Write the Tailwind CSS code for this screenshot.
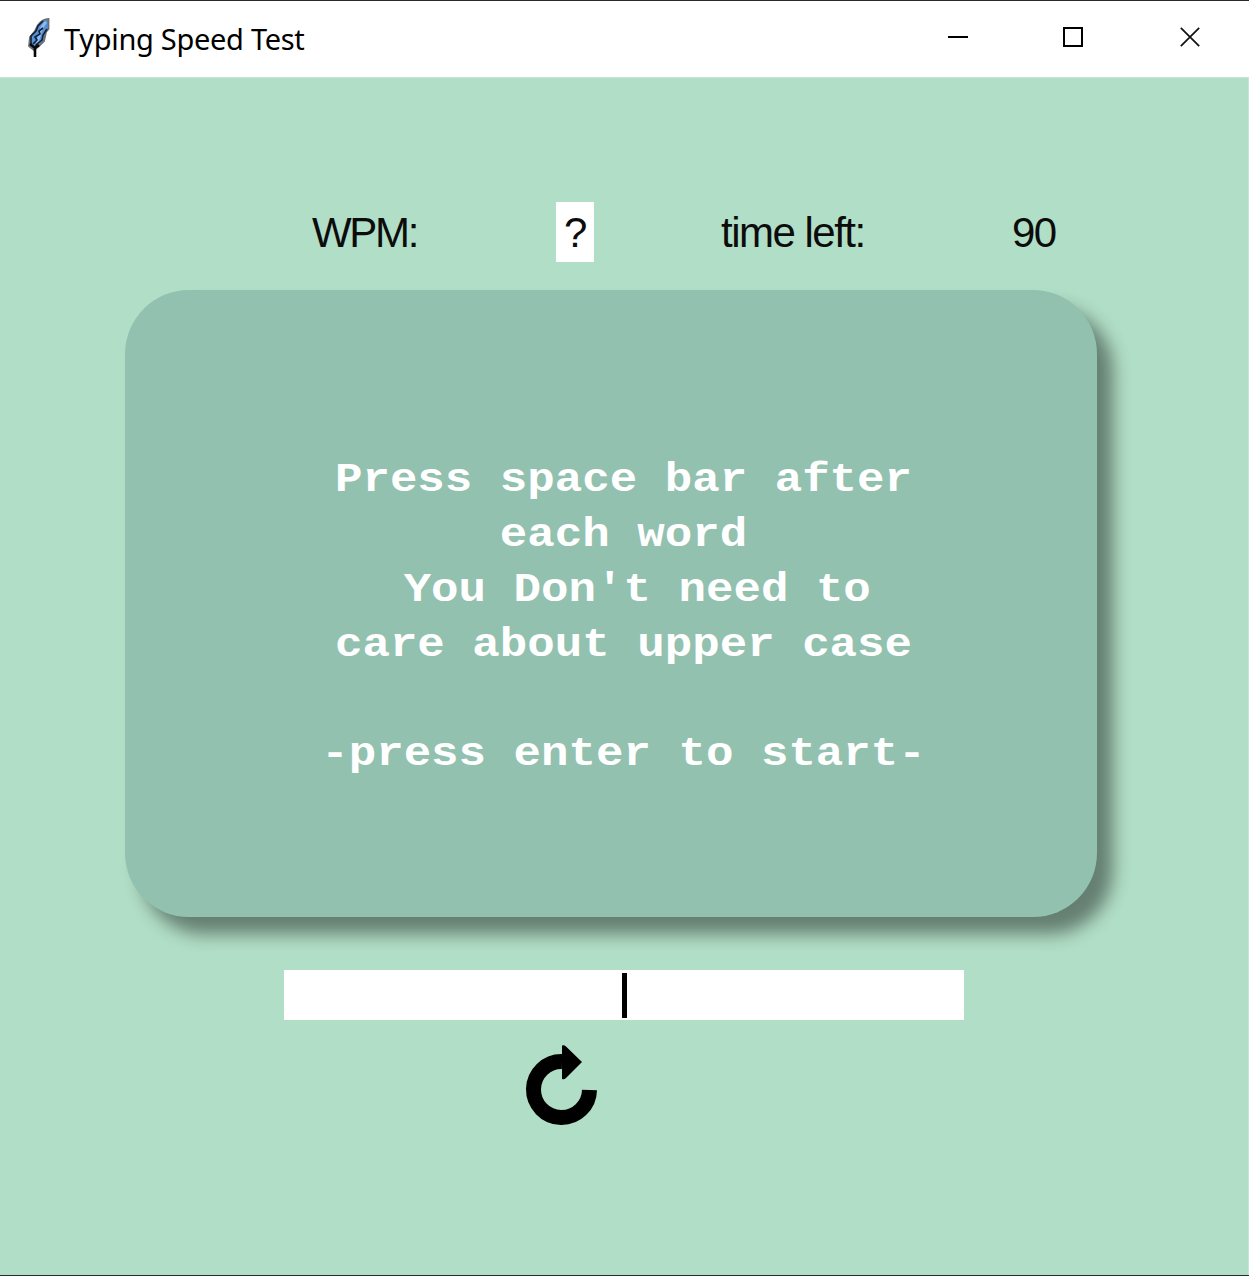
<!DOCTYPE html>
<html lang="en">
<head>
<meta charset="utf-8">
<title>Typing Speed Test</title>
<script src="https://cdn.jsdelivr.net/npm/@tailwindcss/browser@4"></script>
</head>
<body class="flex h-[1276px] w-[1249px] flex-col overflow-hidden border-y border-[#2b2929] bg-[#b1dec6]">
  <header class="flex h-[76px] shrink-0 items-start bg-white">
    <svg class="mt-[15px] ml-[26px] h-[42px] w-[26px]" viewBox="0 0 26 42">
      <path d="M22.500 3Q17 3 12 9L9 15L4 21L3 30L8 34L13 30L18 25L20 16L22.500 13Z" fill="#5590d8" stroke="#6b6f75" stroke-width="1.800"/>
      <path d="M20 6Q15 11 14 18L11 27" fill="none" stroke="#8ebcf0" stroke-width="2.500"/>
      <path d="M17 5L12 10L10 15L5 20L5 28M17 12L13 15L14 18L9 21L11 24L7 28M21 13L17 19L16 24L11 28L9 31" fill="none" stroke="#15202e" stroke-width="1.600"/>
      <path d="M4 28L9 32L9 41M9 32L13 29" fill="none" stroke="#080808" stroke-width="2.600"/>
    </svg>
    <h1 class="mt-[18px] ml-[12px] w-[300px] font-['Noto_Sans','Open_Sans',sans-serif] text-[29px] leading-[40px] tracking-[-0.3px] whitespace-nowrap text-black">Typing Speed Test</h1>
    <div class="mt-[26px] mr-[49px] ml-auto flex gap-[95px]">
      <svg class="size-5" viewBox="0 0 20 20"><path d="M0 10H20" stroke="#000" stroke-width="2"/></svg>
      <svg class="size-5" viewBox="0 0 20 20"><path d="M1 1H19V19H1Z" fill="none" stroke="#000" stroke-width="2"/></svg>
      <svg class="ml-[2px] size-5" viewBox="0 0 20 20"><path d="M.8.8L19.2 19.2M19.2.8L.8 19.2" stroke="#111" stroke-width="1.7"/></svg>
    </div>
  </header>
  <main class="flex flex-1 flex-col border-t border-r border-[#c6e7d5] font-['Liberation_Sans',Arial,sans-serif]">
    <div class="mt-[124px] ml-[312px] flex h-[60px] text-[42px] leading-[62px] tracking-[-1.5px] whitespace-nowrap text-[#0c0c0c]">
      <span class="w-[244px] tracking-[-2.3px]">WPM:</span>
      <span class="w-[38px] bg-white pl-[8px]">?</span>
      <span class="ml-[127px] w-[291px]">time left:</span>
      <span>90</span>
    </div>
    <section class="mt-[28px] ml-[125px] h-[627px] w-[972px] rounded-[64px] bg-[#92c1af] pt-[163px] shadow-[16px_17px_17px_0_rgba(0,0,0,0.43)]">
      <pre class="ml-[25px] origin-top scale-y-90 text-center font-['Liberation_Mono','Courier_New',monospace] text-[45.8px] leading-[61.1px] font-bold text-white">Press space bar after
each word
 You Don't need to
care about upper case

-press enter to start-</pre>
    </section>
    <div class="mt-[53px] ml-[284px] flex h-[50px] w-[680px] items-center justify-center bg-white">
      <span class="h-[45px] w-[5px] bg-black"></span>
    </div>
    <button class="mt-[24px] ml-[525px] h-[82px] w-[74px]" aria-label="Restart">
      <svg class="h-[82px] w-[74px]" viewBox="0 0 74 82">
        <path d="M64.500 46A28 28 0 1 1 37 17.500" fill="none" stroke="#000" stroke-width="15"/>
        <path d="M37 1.500Q39 .5 41 2.500L57 18L41 34Q39 36 37 35Z"/>
      </svg>
    </button>
  </main>
</body>
</html>
